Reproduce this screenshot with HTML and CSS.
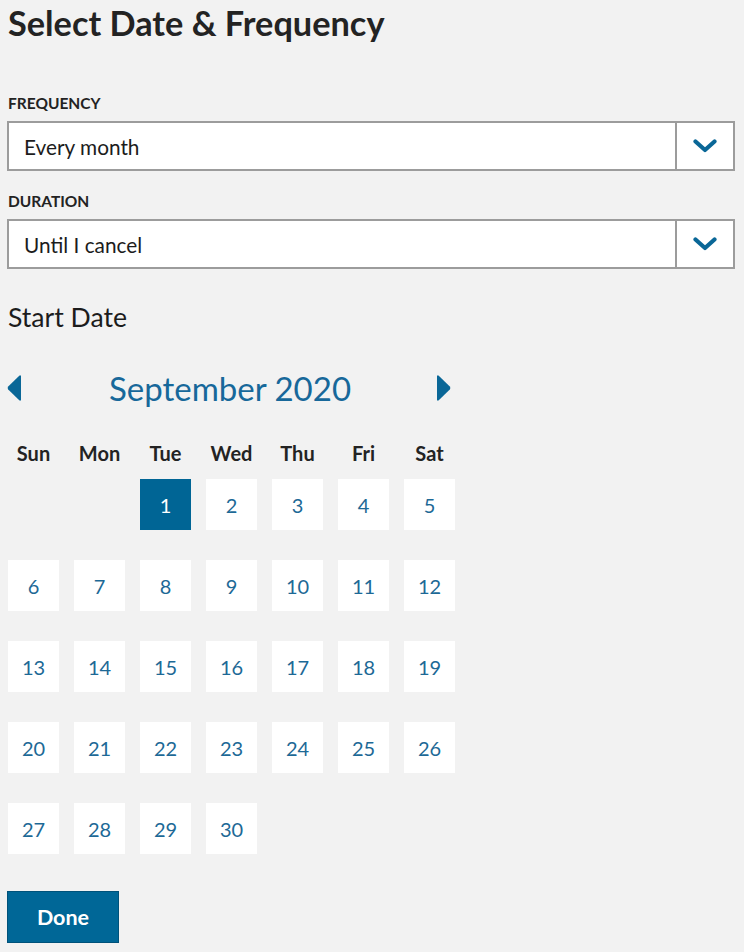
FILE: index.html
```html
<!DOCTYPE html>
<html lang="en">
<head>
<meta charset="utf-8">
<title>Select Date &amp; Frequency</title>
<link rel="stylesheet" href="styles.css">
</head>
<body>
<main class="page">
  <h1 class="title">Select Date &amp; Frequency</h1>

  <div class="field field-first">
    <label class="field-label">FREQUENCY</label>
    <div class="select">
      <span class="select-value">Every month</span>
      <span class="select-btn">
        <svg class="chev" width="24" height="14" viewBox="0 0 24 14"><path d="M2.5 2.5 L12 11 L21.5 2.5" fill="none" stroke="#0a6797" stroke-width="4.2" stroke-linecap="round" stroke-linejoin="round"/></svg>
      </span>
    </div>
  </div>

  <div class="field">
    <label class="field-label">DURATION</label>
    <div class="select">
      <span class="select-value">Until I cancel</span>
      <span class="select-btn">
        <svg class="chev" width="24" height="14" viewBox="0 0 24 14"><path d="M2.5 2.5 L12 11 L21.5 2.5" fill="none" stroke="#0a6797" stroke-width="4.2" stroke-linecap="round" stroke-linejoin="round"/></svg>
      </span>
    </div>
  </div>

  <h2 class="section-title">Start Date</h2>

  <section class="calendar">
    <div class="cal-head">
      <button class="cal-nav" aria-label="Previous month">
        <svg width="15" height="26" viewBox="0 0 15 26"><path d="M14 0.5 L14 25.5 L12.5 25.5 L1.2 14.6 Q0 13 1.2 11.4 L12.5 0.5 Z" fill="#0a6797"/></svg>
      </button>
      <div class="cal-month">September 2020</div>
      <button class="cal-nav" aria-label="Next month">
        <svg width="15" height="26" viewBox="0 0 15 26"><path d="M1 0.5 L1 25.5 L2.5 25.5 L13.8 14.6 Q15 13 13.8 11.4 L2.5 0.5 Z" fill="#0a6797"/></svg>
      </button>
    </div>
    <div class="cal-grid">
      <div class="dow">Sun</div><div class="dow">Mon</div><div class="dow">Tue</div><div class="dow">Wed</div><div class="dow">Thu</div><div class="dow">Fri</div><div class="dow">Sat</div>
      <div class="empty"></div><div class="empty"></div>
      <div class="day selected">1</div><div class="day">2</div><div class="day">3</div><div class="day">4</div><div class="day">5</div>
      <div class="day">6</div><div class="day">7</div><div class="day">8</div><div class="day">9</div><div class="day">10</div><div class="day">11</div><div class="day">12</div>
      <div class="day">13</div><div class="day">14</div><div class="day">15</div><div class="day">16</div><div class="day">17</div><div class="day">18</div><div class="day">19</div>
      <div class="day">20</div><div class="day">21</div><div class="day">22</div><div class="day">23</div><div class="day">24</div><div class="day">25</div><div class="day">26</div>
      <div class="day">27</div><div class="day">28</div><div class="day">29</div><div class="day">30</div>
    </div>
  </section>

  <button class="done">Done</button>
</main>
</body>
</html>
```

FILE: styles.css
```css
html, body {
  margin: 0;
  padding: 0;
  background: #f2f2f2;
}

body {
  font-family: Lato, "Open Sans", "Liberation Sans", sans-serif;
  color: #222222;
}

.page {
  padding: 2px 9px 0 7px;
  display: flex;
  flex-direction: column;
}

.title {
  margin: 0;
  padding-left: 1px;
  font-size: 34.3px;
  line-height: 41px;
  font-weight: 700;
  color: #232323;
}

.field {
  display: flex;
  flex-direction: column;
}

.field-first {
  margin-top: 51px;
}

.field + .field {
  margin-top: 21px;
}

.field-label {
  padding-left: 1px;
  font-size: 15.5px;
  line-height: 18px;
  font-weight: 700;
  color: #232323;
  margin-bottom: 9px;
}

.select {
  display: flex;
  height: 50px;
  box-sizing: border-box;
  border: 2px solid #9c9c9c;
  background: #ffffff;
}

.select-value {
  flex: 1;
  display: flex;
  align-items: center;
  padding-left: 15px;
  font-size: 20.8px;
  color: #1c1c1c;
}

.select-btn {
  width: 56px;
  border-left: 2px solid #9c9c9c;
  display: flex;
  align-items: center;
  justify-content: center;
}

.section-title {
  margin: 33px 0 0;
  padding-left: 1px;
  font-size: 26.6px;
  line-height: 31px;
  font-weight: 400;
  color: #1c1c1c;
}

.calendar {
  margin-top: 36px;
  width: 448px;
}

.cal-head {
  display: flex;
  align-items: center;
  justify-content: space-between;
  height: 38px;
}

.cal-nav {
  border: 0;
  padding: 0;
  background: none;
  display: flex;
  width: 15px;
  height: 26px;
  cursor: pointer;
}

.cal-nav:last-child {
  margin-right: 4px;
}

.cal-month {
  font-size: 33px;
  line-height: 38px;
  color: #17689a;
  margin-left: 2px;
}

.cal-grid {
  margin-top: 34px;
  padding-left: 1px;
  display: grid;
  grid-template-columns: repeat(7, 51px);
  column-gap: 15px;
  row-gap: 30px;
}

.dow {
  text-align: center;
  font-size: 20px;
  line-height: 24px;
  font-weight: 700;
  color: #232323;
  margin-bottom: -16px;
}

.day {
  height: 51px;
  background: #ffffff;
  display: flex;
  align-items: center;
  justify-content: center;
  font-size: 20px;
  color: #1d6996;
}

.day.selected {
  background: #006595;
  color: #ffffff;
}

.done {
  margin-top: 37px;
  align-self: flex-start;
  width: 112px;
  height: 52px;
  box-sizing: border-box;
  border: 1px solid #00527a;
  background: #006797;
  color: #ffffff;
  font-family: Lato, "Open Sans", "Liberation Sans", sans-serif;
  font-size: 21.5px;
  font-weight: 700;
  cursor: pointer;
}
```
